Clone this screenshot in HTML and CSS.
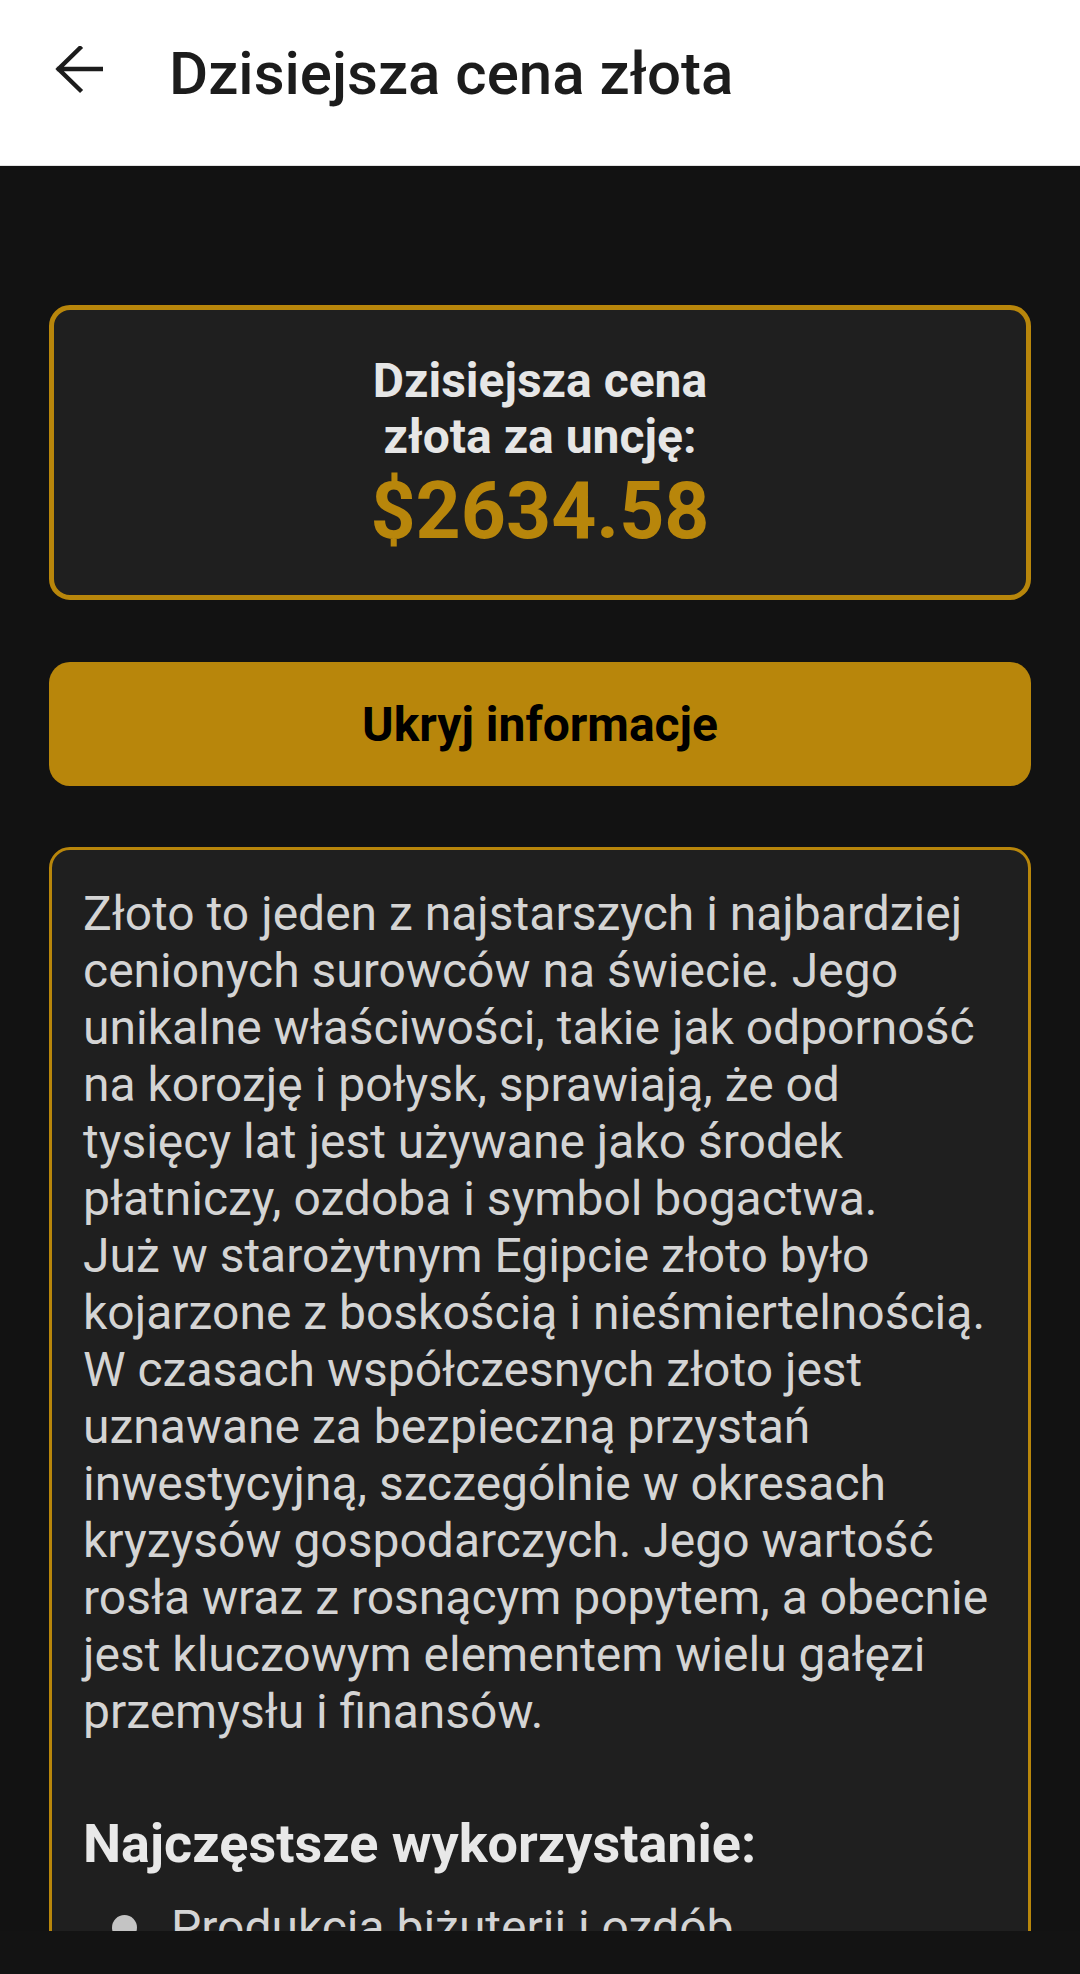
FILE: index.html
```html
<!DOCTYPE html>
<html lang="pl">
<head>
<meta charset="utf-8">
<title>Dzisiejsza cena złota</title>
<link rel="stylesheet" href="styles.css">
</head>
<body>
<div class="screen">
  <header class="appbar">
    <svg class="back" width="48" height="48" viewBox="0 0 48 48" aria-hidden="true">
      <path d="M48 23H4 M25 2L3.5 23L25 44" fill="none" stroke="#1c1c1c" stroke-width="4.4" stroke-linecap="square" stroke-linejoin="miter"/>
    </svg>
    <h1 class="appbar-title">Dzisiejsza cena złota</h1>
  </header>
  <main class="content">
    <section class="price-card">
      <div class="price-label">Dzisiejsza cena złota za uncję:</div>
      <div class="price-value">$2634.58</div>
    </section>
    <button class="toggle-btn" type="button">Ukryj informacje</button>
    <section class="info-card">
      <p class="info-text">Złoto to jeden z najstarszych i najbardziej cenionych surowców na świecie. Jego unikalne właściwości, takie jak odporność na korozję i połysk, sprawiają, że od tysięcy lat jest używane jako środek płatniczy, ozdoba i symbol bogactwa.<br>Już w starożytnym Egipcie złoto było kojarzone z boskością i nieśmiertelnością.<br>W czasach współczesnych złoto jest uznawane za bezpieczną przystań inwestycyjną, szczególnie w okresach kryzysów gospodarczych. Jego wartość rosła wraz z rosnącym popytem, a obecnie jest kluczowym elementem wielu gałęzi przemysłu i finansów.</p>
      <h2 class="info-heading">Najczęstsze wykorzystanie:</h2>
      <ul class="uses">
        <li class="use"><span class="dot"></span><span>Produkcja biżuterii i ozdób</span></li>
        <li class="use"><span class="dot"></span><span>Inwestycje i rezerwy banków centralnych</span></li>
        <li class="use"><span class="dot"></span><span>Elektronika i przemysł</span></li>
      </ul>
    </section>
  </main>
  <div class="navbar"></div>
</div>
</body>
</html>
```
FILE: styles.css
```css
* { box-sizing: border-box; }
html, body {
  margin: 0;
  padding: 0;
  background: #121212;
}
body {
  font-family: Roboto, "Noto Sans", "Liberation Sans", sans-serif;
}
.screen {
  width: 1080px;
  height: 1974px;
  display: flex;
  flex-direction: column;
  overflow: hidden;
}
.appbar {
  flex: 0 0 166px;
  background: #ffffff;
  border-bottom: 1px solid #e2e2e2;
  display: flex;
  align-items: center;
  padding: 0 0 18px 55px;
}
.back {
  flex: 0 0 auto;
  margin-bottom: 8px;
}
.appbar-title {
  margin: 0 0 0 66px;
  font-size: 60px;
  font-weight: 500;
  color: #1c1c1c;
  letter-spacing: 0;
}
.content {
  flex: 1 1 auto;
  overflow: hidden;
  padding: 139px 49px 0;
  display: flex;
  flex-direction: column;
}
.price-card {
  flex: 0 0 auto;
  border: 5px solid #b8860b;
  border-radius: 21px;
  background: #1f1f1f;
  padding: 43px 20px 38px;
  text-align: center;
}
.price-label {
  max-width: 420px;
  margin: 0 auto;
  font-size: 48px;
  line-height: 56px;
  font-weight: 700;
  color: #e6e6e6;
}
.price-value {
  font-size: 78.75px;
  line-height: 92px;
  font-weight: 700;
  color: #b8860b;
}
.toggle-btn {
  flex: 0 0 124px;
  margin-top: 62px;
  border: 0;
  border-radius: 21px;
  background: #b8860b;
  color: #000000;
  font-family: inherit;
  font-size: 48px;
  font-weight: 700;
  padding: 0;
}
.info-card {
  flex: 0 0 auto;
  margin-top: 61px;
  border: 3px solid #b8860b;
  border-radius: 21px;
  background: #1f1f1f;
  padding: 35px 36px 40px 31px;
}
.info-text {
  margin: 0;
  font-size: 48px;
  line-height: 57px;
  color: #d4d4d4;
}
.info-heading {
  margin: 73px 0 0;
  font-size: 54px;
  line-height: 62px;
  font-weight: 700;
  color: #e8e8e8;
}
.uses {
  list-style: none;
  margin: 24px 0 0;
  padding: 0;
}
.use {
  display: flex;
  align-items: center;
  font-size: 48px;
  line-height: 57px;
  color: #d4d4d4;
  padding-left: 29px;
}
.dot {
  flex: 0 0 25px;
  width: 25px;
  height: 25px;
  border-radius: 50%;
  background: #c4c4c4;
  margin-right: 34px;
}
.navbar {
  flex: 0 0 43px;
  background: #131313;
}
```
